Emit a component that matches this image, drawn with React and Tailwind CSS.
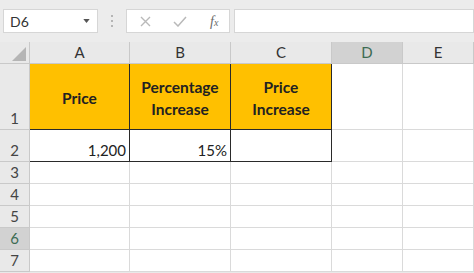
const cols = [
  { key: 'A', w: 'w-[100px]' },
  { key: 'B', w: 'w-[101px]' },
  { key: 'C', w: 'w-[101px]' },
  { key: 'D', w: 'w-[71px]', active: true },
  { key: 'E', w: 'flex-1' },
]

const font = { fontFamily: 'Lato, "Open Sans", sans-serif' }

function Toolbar() {
  return (
    <div className="flex h-[42px] items-start bg-[#ececec] pt-[9px]">
      <div className="ml-[3px] flex h-[24px] w-[95px] items-center justify-between border border-[#d6d6d6] bg-white pl-[6px] pr-[7px]">
        <span className="text-[14px] text-[#333]">D6</span>
        <svg width="7" height="4" viewBox="0 0 8 5">
          <path d="M0 0h8L4 5z" fill="#555" />
        </svg>
      </div>
      <div className="ml-[13px] mt-[6px] flex flex-col gap-[3px]">
        <span className="h-[2px] w-[2px] bg-[#b5b5b5]" />
        <span className="h-[2px] w-[2px] bg-[#b5b5b5]" />
        <span className="h-[2px] w-[2px] bg-[#b5b5b5]" />
      </div>
      <div className="ml-[13px] flex h-[24px] w-[104px] items-center border border-[#d6d6d6] bg-white pl-[13px]">
        <svg width="11" height="11" viewBox="0 0 11 11">
          <path d="M1 1l9 9M10 1l-9 9" stroke="#b9b9b9" strokeWidth="1.4" />
        </svg>
        <svg className="ml-[22px]" width="14" height="11" viewBox="0 0 14 11">
          <path d="M1 6l4 4 8-9" stroke="#b9b9b9" strokeWidth="1.5" fill="none" />
        </svg>
        <span className="ml-[23px] text-[14px] italic text-[#6a6a6a]" style={{ fontFamily: '"Liberation Serif", serif' }}>
          f<span className="text-[10px]">x</span>
        </span>
      </div>
      <div className="ml-[4px] h-[24px] flex-1 border border-[#d6d6d6] bg-white" />
    </div>
  )
}

function RowHead({ n, h, active }) {
  return (
    <div
      className={`flex w-[30px] shrink-0 items-end justify-center border-r border-b border-[#c9c9c9] text-[15px] ${h} ${
        active ? 'bg-[#d2d2d2] text-[#3d6b52]' : 'bg-[#e9e9e9] text-[#444]'
      }`}
    >
      {n}
    </div>
  )
}

function Cell({ w, h, className = '', children }) {
  return (
    <div className={`flex shrink-0 border-r border-b ${w} ${h} ${className}`}>{children}</div>
  )
}

export default function App() {
  return (
    <div className="flex h-[273px] w-[474px] flex-col overflow-hidden bg-[#e9e9e9]" style={font}>
      <Toolbar />
      {/* column headers */}
      <div className="flex h-[22px]">
        <div className="relative w-[30px] shrink-0 border-r border-b border-[#c9c9c9] bg-[#e9e9e9]">
          <svg className="absolute bottom-[2px] right-[3px]" width="14" height="14" viewBox="0 0 14 14">
            <path d="M14 0V14H0z" fill="#b5b5b5" />
          </svg>
        </div>
        {cols.map((c) => (
          <div
            key={c.key}
            className={`flex shrink-0 items-center justify-center border-r border-b border-[#c9c9c9] text-[15px] ${c.w} ${
              c.active ? 'bg-[#d2d2d2] text-[#3d6b52]' : 'bg-[#e9e9e9] text-[#333]'
            }`}
          >
            {c.key}
          </div>
        ))}
      </div>
      {/* row 1 */}
      <div className="flex">
        <RowHead n="1" h="h-[66px]" />
        {['Price', 'Percentage Increase', 'Price Increase'].map((t, i) => (
          <Cell
            key={t}
            w={cols[i].w}
            h="h-[66px]"
            className="items-center justify-center border-[#2a2a2a] bg-[#ffc000] pt-[2px] text-center text-[15.5px] leading-[22px] font-bold text-[#222]"
          >
            {t === 'Price' ? t : <span className="w-[84px]">{t}</span>}
          </Cell>
        ))}
        <Cell w="w-[71px]" h="h-[66px]" className="border-[#dadada] bg-white" />
        <Cell w="flex-1" h="h-[66px]" className="border-[#dadada] bg-white" />
      </div>
      {/* row 2 */}
      <div className="flex">
        <RowHead n="2" h="h-[32px]" />
        {['1,200', '15%', ''].map((t, i) => (
          <Cell
            key={i}
            w={cols[i].w}
            h="h-[32px]"
            className="items-end justify-end border-[#2a2a2a] bg-white pb-[0px] pr-[3px] text-[15px] text-[#222]"
          >
            {t}
          </Cell>
        ))}
        <Cell w="w-[71px]" h="h-[32px]" className="border-[#dadada] bg-white" />
        <Cell w="flex-1" h="h-[32px]" className="border-[#dadada] bg-white" />
      </div>
      {[3, 4, 5, 6, 7].map((n) => (
        <div key={n} className="flex">
          <RowHead n={n} h="h-[22px]" active={n === 6} />
          {cols.map((c) => (
            <Cell key={c.key} w={c.w} h="h-[22px]" className="border-[#dadada] bg-white" />
          ))}
        </div>
      ))}
    </div>
  )
}
